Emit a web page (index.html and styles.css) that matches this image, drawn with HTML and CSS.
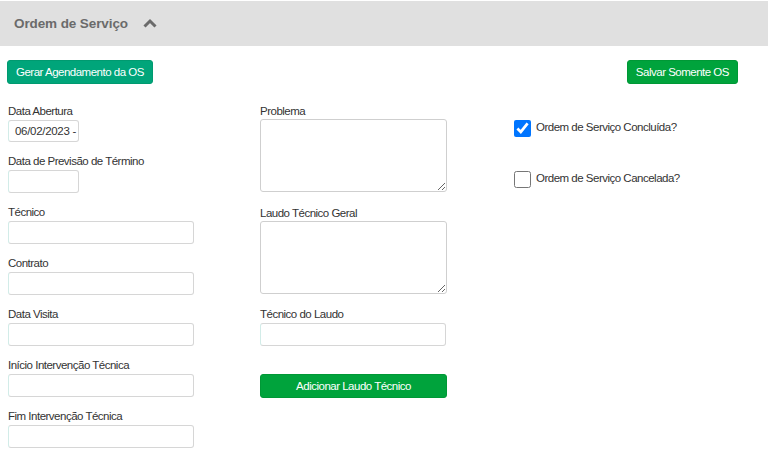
FILE: index.html
```html
<!DOCTYPE html>
<html lang="pt">
<head>
<meta charset="utf-8">
<link rel="stylesheet" href="styles.css">
</head>
<body>
<div class="panel-head">
  <span class="title">Ordem de Serviço</span>
  <svg class="chev" width="14" height="10" viewBox="0 0 14 10"><path d="M1.5 8.5 L7 3 L12.5 8.5" fill="none" stroke="#6b6b6b" stroke-width="3"/></svg>
</div>
<div class="content">
  <div class="actions">
    <button class="btn btn-teal">Gerar Agendamento da OS</button>
    <button class="btn btn-green">Salvar Somente OS</button>
  </div>
  <div class="grid">
    <div class="col">
      <div class="field"><label>Data Abertura</label><div class="input short first">06/02/2023 -</div></div>
      <div class="field"><label>Data de Previsão de Término</label><div class="input short"></div></div>
      <div class="field"><label>Técnico</label><div class="input"></div></div>
      <div class="field"><label>Contrato</label><div class="input"></div></div>
      <div class="field"><label>Data Visita</label><div class="input"></div></div>
      <div class="field"><label>Início Intervenção Técnica</label><div class="input"></div></div>
      <div class="field"><label>Fim Intervenção Técnica</label><div class="input"></div></div>
    </div>
    <div class="col">
      <div class="field ta1"><label>Problema</label><textarea class="area"></textarea></div>
      <div class="field ta2"><label>Laudo Técnico Geral</label><textarea class="area"></textarea></div>
      <div class="field"><label>Técnico do Laudo</label><div class="input"></div></div>
      <button class="btn btn-green wide">Adicionar Laudo Técnico</button>
    </div>
    <div class="col col3">
      <label class="check"><input type="checkbox" checked><span>Ordem de Serviço Concluída?</span></label>
      <label class="check"><input type="checkbox"><span>Ordem de Serviço Cancelada?</span></label>
    </div>
  </div>
</div>
</body>
</html>
```
FILE: styles.css
```css
* { box-sizing: border-box; }
body {
  margin: 0;
  font-family: "Liberation Sans", Arial, sans-serif;
  font-size: 11.5px;
  letter-spacing: -0.5px;
  color: #333;
  background: #fff;
}
.panel-head {
  margin-top: 1px;
  height: 45px;
  background: #e0e0e0;
  display: flex;
  align-items: center;
  padding-left: 14px;
}
.title {
  font-size: 13.5px;
  font-weight: bold;
  color: #6b6b6b;
  letter-spacing: -0.1px;
}
.chev { margin-left: 15px; margin-top: -1px; }
.content { padding: 14px 30px 0 7px; }
.actions {
  display: flex;
  justify-content: space-between;
}
.btn {
  font-family: "Liberation Sans", Arial, sans-serif;
  font-size: 11.5px;
  letter-spacing: -0.5px;
  color: #fff;
  border: 1px solid transparent;
  border-radius: 3px;
  height: 24px;
  padding: 0 8px;
  cursor: pointer;
}
.btn-teal { background: #00a57a; border-color: #009a70; }
.btn-green { background: #00a33c; border-color: #009836; }
.grid {
  display: grid;
  grid-template-columns: 252px 254px 1fr;
  margin-top: 20px;
  padding-left: 1px;
}
.field { margin-bottom: 12px; }
.field label {
  display: block;
  line-height: 14px;
  margin-bottom: 2px;
}
.input {
  width: 186px;
  height: 23px;
  border: 1px solid #d6d6d6;
  border-left-color: #d2ece8;
  border-radius: 3px;
  padding: 3px 6px;
  line-height: 15px;
  color: #333;
  white-space: nowrap;
  overflow: hidden;
  letter-spacing: -0.3px;
}
.input.short { width: 71px; }
.input.first { margin-top: 1px; height: 22px; }
.area {
  display: block;
  width: 187px;
  height: 73px;
  border: 1px solid #cfcfcf;
  border-radius: 3px;
  margin: 0;
  resize: vertical;
}
.ta1, .ta2 { margin-bottom: 13px; }
.ta1 label, .ta2 label { margin-bottom: 1px; }
.ta1 { margin-bottom: 14px; }
.wide {
  width: 187px;
  height: 24px;
  margin-top: 16px;
}
.col3 { padding-top: 15px; }
.check {
  display: flex;
  align-items: center;
  height: 18px;
  margin-bottom: 33px;
}
.check input {
  width: 17px;
  height: 17px;
  margin: 0 5px 0 0;
  accent-color: #0075ff;
}
.check span { margin-top: -2px; }
```
